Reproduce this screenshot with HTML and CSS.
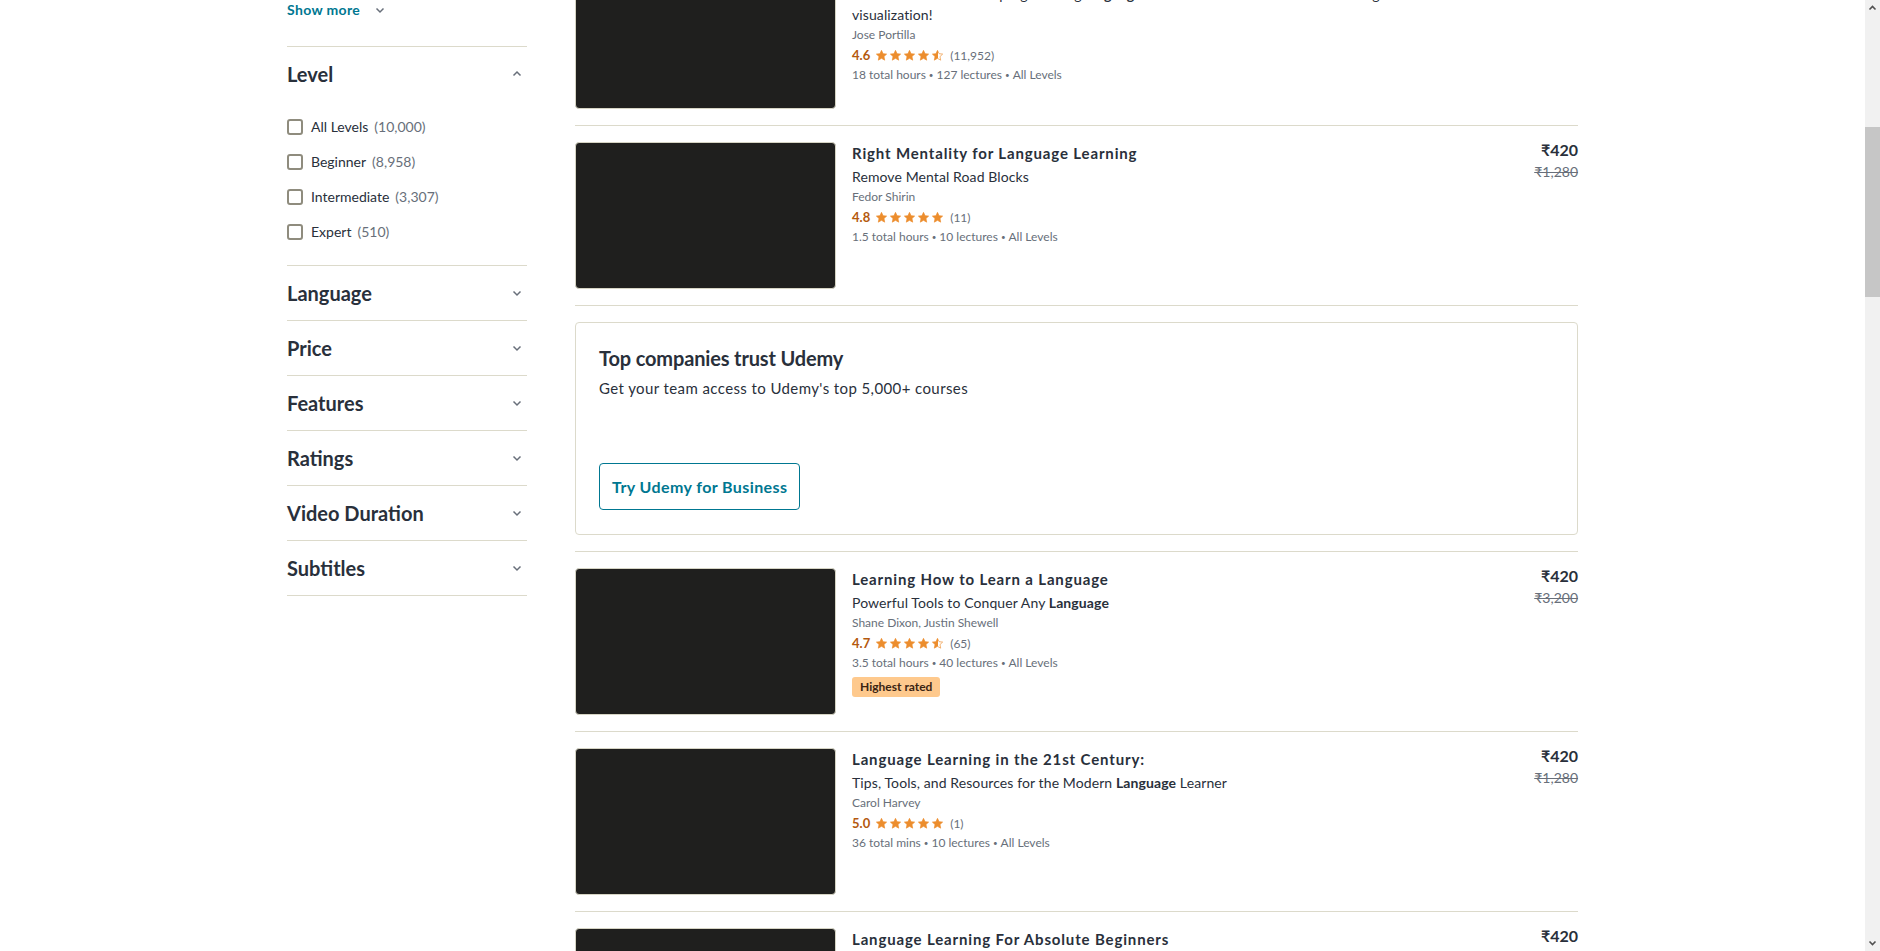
FILE: index.html
```html
<!DOCTYPE html>
<html lang="en">
<head>
<meta charset="utf-8">
<title>Language learning courses</title>
<link rel="stylesheet" href="styles.css">
</head>
<body>
<svg class="defs" width="0" height="0" aria-hidden="true">
  <defs>
    <linearGradient id="halfFill">
      <stop offset="50%" stop-color="#ec8d2d"/>
      <stop offset="50%" stop-color="#ffffff"/>
    </linearGradient>
    <symbol id="star" viewBox="0 0 24 24">
      <path d="M12 2.5l2.9 6.1 6.6.8-4.9 4.6 1.3 6.6L12 17.3l-5.9 3.3 1.3-6.6-4.9-4.6 6.6-.8z"/>
    </symbol>
    <symbol id="chev-down" viewBox="0 0 12 12">
      <path d="M2.5 4.5L6 8l3.5-3.5" fill="none" stroke-width="1.5"/>
    </symbol>
    <symbol id="chev-up" viewBox="0 0 12 12">
      <path d="M2.5 7.5L6 4l3.5 3.5" fill="none" stroke-width="1.5"/>
    </symbol>
  </defs>
</svg>
<div class="app">
  <div class="viewport">
    <div class="container">
      <aside class="sidebar">
        <div class="filter show-more-wrap">
          <button class="show-more">Show more <svg class="chev"><use href="#chev-down"/></svg></button>
        </div>
        <div class="filter">
          <div class="filter-head"><span>Level</span><svg class="chev"><use href="#chev-up"/></svg></div>
          <ul class="options">
            <li class="option"><span class="box"></span>All Levels <span class="count">(10,000)</span></li>
            <li class="option"><span class="box"></span>Beginner <span class="count">(8,958)</span></li>
            <li class="option"><span class="box"></span>Intermediate <span class="count">(3,307)</span></li>
            <li class="option"><span class="box"></span>Expert <span class="count">(510)</span></li>
          </ul>
        </div>
        <div class="filter"><div class="filter-head"><span>Language</span><svg class="chev"><use href="#chev-down"/></svg></div></div>
        <div class="filter"><div class="filter-head"><span>Price</span><svg class="chev"><use href="#chev-down"/></svg></div></div>
        <div class="filter"><div class="filter-head"><span>Features</span><svg class="chev"><use href="#chev-down"/></svg></div></div>
        <div class="filter"><div class="filter-head"><span>Ratings</span><svg class="chev"><use href="#chev-down"/></svg></div></div>
        <div class="filter"><div class="filter-head"><span>Video Duration</span><svg class="chev"><use href="#chev-down"/></svg></div></div>
        <div class="filter"><div class="filter-head"><span>Subtitles</span><svg class="chev"><use href="#chev-down"/></svg></div></div>
      </aside>

      <main class="results">
        <div class="course first">
          <div class="thumb"></div>
          <div class="info">
            <div class="title">Data Science and Machine Learning Bootcamp with R</div>
            <div class="sub">Learn how to use the R programming <b>language</b> for data science and machine learning and data<br>visualization!</div>
            <div class="author">Jose Portilla</div>
            <div class="rating"><span class="score">4.6</span><span class="stars"><svg class="star"><use href="#star"/></svg><svg class="star"><use href="#star"/></svg><svg class="star"><use href="#star"/></svg><svg class="star"><use href="#star"/></svg><svg class="star half"><use href="#star"/></svg></span><span class="num">(11,952)</span></div>
            <div class="meta">18 total hours<i>•</i>127 lectures<i>•</i>All Levels</div>
          </div>
          <div class="price"><div class="now">₹420</div><div class="was">₹8,640</div></div>
        </div>

        <div class="course">
          <div class="thumb"></div>
          <div class="info">
            <div class="title">Right Mentality for Language Learning</div>
            <div class="sub">Remove Mental Road Blocks</div>
            <div class="author">Fedor Shirin</div>
            <div class="rating"><span class="score">4.8</span><span class="stars"><svg class="star"><use href="#star"/></svg><svg class="star"><use href="#star"/></svg><svg class="star"><use href="#star"/></svg><svg class="star"><use href="#star"/></svg><svg class="star"><use href="#star"/></svg></span><span class="num">(11)</span></div>
            <div class="meta">1.5 total hours<i>•</i>10 lectures<i>•</i>All Levels</div>
          </div>
          <div class="price"><div class="now">₹420</div><div class="was">₹1,280</div></div>
        </div>

        <div class="promo-wrap">
          <section class="promo">
            <h2>Top companies trust Udemy</h2>
            <p>Get your team access to Udemy's top 5,000+ courses</p>
            <button class="promo-btn">Try Udemy for Business</button>
          </section>
        </div>

        <div class="course">
          <div class="thumb"></div>
          <div class="info">
            <div class="title">Learning How to Learn a Language</div>
            <div class="sub">Powerful Tools to Conquer Any <b>Language</b></div>
            <div class="author">Shane Dixon, Justin Shewell</div>
            <div class="rating"><span class="score">4.7</span><span class="stars"><svg class="star"><use href="#star"/></svg><svg class="star"><use href="#star"/></svg><svg class="star"><use href="#star"/></svg><svg class="star"><use href="#star"/></svg><svg class="star half"><use href="#star"/></svg></span><span class="num">(65)</span></div>
            <div class="meta">3.5 total hours<i>•</i>40 lectures<i>•</i>All Levels</div>
            <span class="badge">Highest rated</span>
          </div>
          <div class="price"><div class="now">₹420</div><div class="was">₹3,200</div></div>
        </div>

        <div class="course">
          <div class="thumb"></div>
          <div class="info">
            <div class="title">Language Learning in the 21st Century:</div>
            <div class="sub">Tips, Tools, and Resources for the Modern <b>Language</b> Learner</div>
            <div class="author">Carol Harvey</div>
            <div class="rating"><span class="score">5.0</span><span class="stars"><svg class="star"><use href="#star"/></svg><svg class="star"><use href="#star"/></svg><svg class="star"><use href="#star"/></svg><svg class="star"><use href="#star"/></svg><svg class="star"><use href="#star"/></svg></span><span class="num">(1)</span></div>
            <div class="meta">36 total mins<i>•</i>10 lectures<i>•</i>All Levels</div>
          </div>
          <div class="price"><div class="now">₹420</div><div class="was">₹1,280</div></div>
        </div>

        <div class="course">
          <div class="thumb"></div>
          <div class="info">
            <div class="title">Language Learning For Absolute Beginners</div>
            <div class="sub">Learn any <b>language</b> from scratch</div>
            <div class="author">Jan van der Aa</div>
          </div>
          <div class="price"><div class="now">₹420</div><div class="was">₹1,280</div></div>
        </div>
      </main>
    </div>
  </div>
  <div class="scrollbar">
    <div class="sb-arrow"><svg viewBox="0 0 15 17"><path d="M4.5 9.5L7.5 6.5l3 3" fill="none" stroke="#505050" stroke-width="1.6"/></svg></div>
    <div class="sb-track"><div class="sb-thumb"></div></div>
    <div class="sb-arrow"><svg viewBox="0 0 15 17"><path d="M4.5 7.5l3 3 3-3" fill="none" stroke="#505050" stroke-width="1.6"/></svg></div>
  </div>
</div>
</body>
</html>
```
FILE: styles.css
```css
* { box-sizing: border-box; }
html, body { margin: 0; padding: 0; background: #fff; }
body {
  font-family: Lato, "Open Sans", "Liberation Sans", sans-serif;
  color: #29303b;
}
.defs { position: absolute; width: 0; height: 0; overflow: hidden; }

.app { display: flex; height: 951px; overflow: hidden; }
.viewport { flex: 1; overflow: hidden; }
.container {
  width: 1291px;
  margin: 0 auto;
  display: flex;
  gap: 48px;
  align-items: flex-start;
}

/* Sidebar */
.sidebar { width: 240px; flex: none; }
.filter { border-bottom: 1px solid #dcdacb; }
.show-more-wrap { padding-bottom: 26px; }
.show-more {
  border: 0; background: none; padding: 0; margin: 0;
  font: 700 14px/20px Lato, sans-serif;
  letter-spacing: 0.35px;
  color: #007791;
  display: flex; align-items: center; gap: 14px;
  height: 20px;
}
.chev { width: 12px; height: 12px; stroke: #686f7a; flex: none; }
.filter-head {
  display: flex; align-items: center; justify-content: space-between;
  padding: 16px 4px 16px 0;
  font-size: 20px; font-weight: 700; line-height: 22px;
  color: #29303b;
}
.options { list-style: none; margin: 0; padding: 8px 0 16px; }
.option {
  height: 35px; display: flex; align-items: center;
  font-size: 14px; color: #29303b;
}
.box {
  width: 16px; height: 16px; border: 2px solid #8f8c7e; border-radius: 3px;
  margin-right: 8px; flex: none;
}
.count { color: #686f7a; margin-left: 6px; }

/* Results */
.results { flex: 1; min-width: 0; margin-top: -54px; }
.course {
  display: flex; gap: 16px;
  padding: 16px 0;
  border-bottom: 1px solid #dcdacb;
}
.thumb {
  width: 261px; height: 147px; flex: none;
  background: #1f1f1e;
  border: 1px solid #d6d4c4;
  border-radius: 4px;
}
.info { flex: 1; min-width: 0; padding-top: 2px; }
.course.first .info { padding-top: 0; }
.title {
  font-size: 15px; font-weight: 700; line-height: 19px;
  color: #29303b; letter-spacing: 0.85px;
}
.sub {
  margin-top: 4px;
  font-size: 14px; line-height: 20px; color: #29303b; letter-spacing: 0.1px;
}
.sub b { font-weight: 700; }
.author { font-size: 12px; line-height: 20px; color: #686f7a; }
.rating { display: flex; align-items: center; height: 20px; font-size: 12px; color: #686f7a; }
.score { font-size: 13px; font-weight: 700; color: #b4590e; margin-right: 5px; }
.stars { display: flex; gap: 1px; margin-right: 6px; }
.star { width: 13px; height: 13px; fill: #ec8d2d; stroke: #ec8d2d; stroke-width: 1.2; }
.star.half { fill: url(#halfFill); }
.meta { font-size: 12px; line-height: 20px; color: #686f7a; }
.meta i { font-style: normal; font-size: 8px; margin: 0 3px; vertical-align: 1px; }
.badge {
  display: inline-block; margin-top: 4px;
  background: #fec98d; color: #3b2413;
  font-size: 12px; font-weight: 700; line-height: 20px;
  padding: 0 8px; border-radius: 3px;
}
.price { flex: none; width: 110px; text-align: right; }
.now { font-size: 16px; font-weight: 700; line-height: 16px; color: #29303b; }
.was {
  margin-top: 4px; font-size: 14px; line-height: 20px;
  color: #686f7a; text-decoration: line-through;
}

/* Promo */
.promo-wrap { padding: 16px 0; border-bottom: 1px solid #dcdacb; }
.promo {
  height: 213px;
  border: 1px solid #dcdacb; border-radius: 4px;
  padding: 24px 23px;
}
.promo h2 { margin: 0; font-size: 20px; line-height: 22px; font-weight: 700; color: #29303b; letter-spacing: -0.15px; }
.promo p { margin: 8px 0 0; font-size: 15px; line-height: 22px; color: #29303b; letter-spacing: 0.4px; }
.promo-btn {
  margin-top: 64px;
  height: 47px; padding: 0 12px;
  background: #fff; border: 1px solid #007791; border-radius: 4px;
  font: 700 16px Lato, sans-serif; color: #007791;
  letter-spacing: 0.4px;
}

/* Fake scrollbar */
.scrollbar { width: 15px; flex: none; background: #f1f1f1; display: flex; flex-direction: column; }
.sb-arrow { height: 17px; flex: none; }
.sb-arrow svg { width: 15px; height: 17px; display: block; }
.sb-track { flex: 1; padding-top: 110px; }
.sb-thumb { height: 170px; background: #c6c6c6; }
```
